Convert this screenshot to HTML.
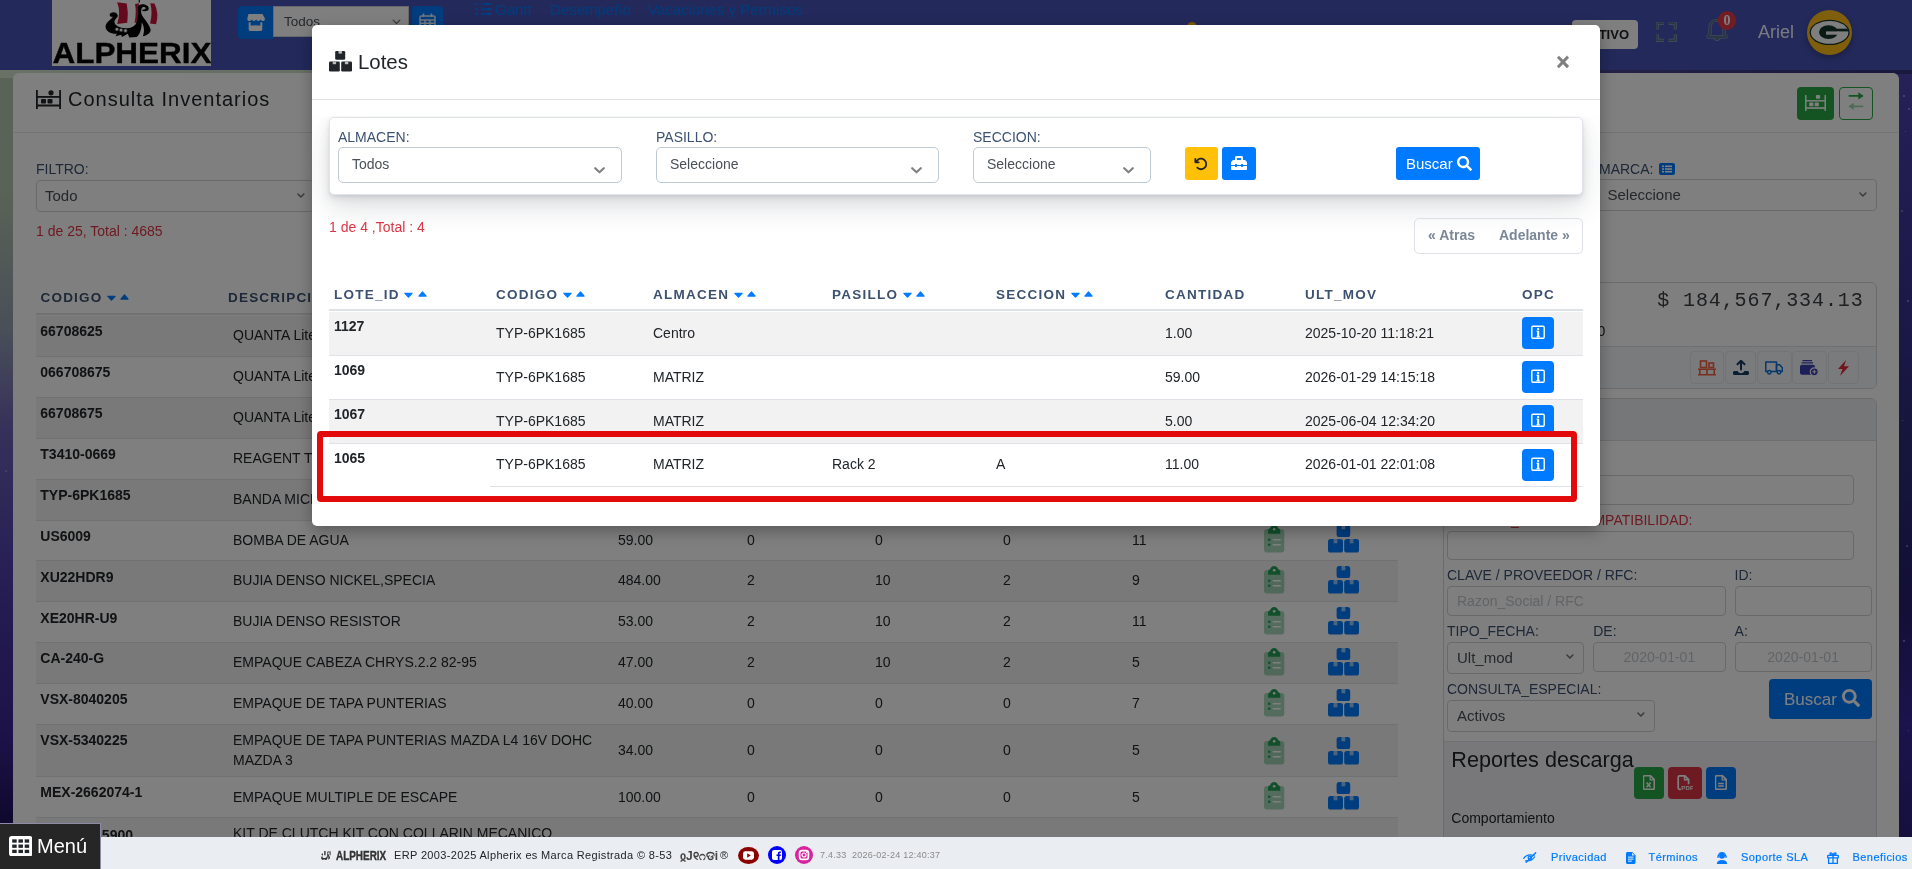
<!DOCTYPE html>
<html lang="es">
<head>
<meta charset="utf-8">
<title>Consulta Inventarios - Lotes</title>
<style>
*{box-sizing:border-box;margin:0;padding:0}
html,body{width:1912px;height:869px;overflow:hidden}
#modal,#card,#nav,#footer,#menu{will-change:transform}
body{font-family:"Liberation Sans",Arial,sans-serif;font-size:14px;color:#212529;background:#1a1850;position:relative}
.abs{position:absolute}
svg{display:block}
/* ---------- background page ---------- */
#bg{position:absolute;left:0;top:0;width:1912px;height:869px;overflow:hidden;
 background:linear-gradient(180deg,#b4c6ae 0,#b4c6ae 190px,#949eb0 330px,#6a62b4 430px,#4a38a8 600px,#3a2490 740px,#1c1054 830px,#140a40 869px)}
#bgT{position:absolute;left:0;top:66px;width:1912px;height:12px;background:linear-gradient(90deg,#d2e2cc 0,#ccdcc6 500px,#8a88b0 1300px,#4a4290 1600px,#34307c 1912px)}
#bgR{position:absolute;left:1897px;top:74px;width:15px;height:799px;background:linear-gradient(180deg,#4c42ae 0,#3c3498 180px,#2c2c78 380px,#261e6c 530px,#36289a 650px,#281e70 799px)}
#nav{position:absolute;left:0;top:0;width:1912px;height:70px;background:#4652b4}
#card{position:absolute;left:14px;top:73px;width:1884px;height:820px;background:#fff;border-radius:6px;box-shadow:-1px 0 0 #fff,1px 0 0 #fff}
#overlay{position:absolute;left:0;top:0;width:1912px;height:869px;background:rgba(0,0,0,.5)}

/* nav */
#logo{position:absolute;left:52px;top:0;width:159px;height:66px;background:#fff;overflow:hidden}
#logo .t{position:absolute;left:-20px;top:37.300px;width:200px;text-align:center;font-weight:700;font-size:29px;line-height:32px;color:#000;letter-spacing:0;white-space:nowrap;transform:scaleX(1.085);-webkit-text-stroke:.35px #000}
.nbtn{position:absolute;top:6px;height:33px;background:#007bff;border-radius:4px}
#nsel{position:absolute;left:273px;top:6px;width:136px;height:31px;background:#fff;border:1px solid #ced4da;font-size:13.500px;line-height:29px;color:#495057;padding-left:10px}
.nlink{position:absolute;top:0;font-size:15px;line-height:20px;color:#007bff;white-space:nowrap}
#activo{position:absolute;left:1572px;top:20px;width:66px;height:29px;background:#fff;border-radius:4px;font-size:13px;font-weight:700;line-height:29px;color:#212529;text-align:right;padding-right:9px}
#uname{position:absolute;left:1758px;top:21px;font-size:18px;line-height:22px;color:#f2f5ff}
#avatar{position:absolute;left:1807px;top:10px;width:45px;height:45px;border-radius:50%;background:#ffbc18;box-shadow:0 3px 6px rgba(0,0,0,.25)}
#badge{position:absolute;left:1718px;top:11px;width:18px;height:18.600px;border-radius:50%;background:#e63946;color:#fff;font-family:"Liberation Serif",serif;font-weight:700;font-size:14px;line-height:20.500px;text-align:center}
/* card */
#chead{position:absolute;left:0;top:0;width:1884px;height:60px;border-bottom:1px solid #e1e5eb}
#ctitle{position:absolute;left:54px;top:14px;font-size:20px;line-height:24px;letter-spacing:1px;color:#212529;white-space:nowrap}
.lab{position:absolute;font-size:14px;line-height:16px;color:#3d5170;white-space:nowrap}
.inp{position:absolute;background:#fff;border:1px solid #ced4da;border-radius:4px;font-size:14px;color:#495057;white-space:nowrap;overflow:hidden}
.sel{position:absolute;background:#fff;border:1px solid #ced4da;border-radius:4px;font-size:15px;color:#495057;padding-left:9px;white-space:nowrap}
.sel svg{position:absolute;right:9px}
#bt{position:absolute;left:22px;top:208px;width:1362px}
.bh{position:absolute;font-size:13.500px;font-weight:700;letter-spacing:1.200px;color:#3d5170;line-height:16px;white-space:nowrap}
.bh svg{display:inline-block;vertical-align:top;margin-left:4.450px}
.br{position:absolute;left:0;width:1362px;border-top:1px solid #dee2e6}
.br.s{background:#f2f2f2}
.br b{position:absolute;left:4.300px;top:7.200px;font-size:14px;line-height:16px;color:#212529;white-space:nowrap}
.br span{position:absolute;font-size:14px;line-height:20px;color:#212529;white-space:nowrap}
.br svg{position:absolute}
.pc{position:absolute;border:1px solid #d4d7db;border-radius:6px;background:#fff;overflow:hidden}

#footer .ft{position:absolute;top:0;font-size:11px;line-height:32px;color:#212529;white-space:nowrap;letter-spacing:.35px}
#footer .fl{position:absolute;top:3px;font-size:11px;line-height:34px;color:#007bff;white-space:nowrap;letter-spacing:.45px;-webkit-text-stroke:.2px #007bff}
#footer svg{position:absolute}
#menu{border-top:1.500px solid #8c8ca8;border-right:1.500px solid #8c8ca8}
#menu .t{position:absolute;left:37px;top:9px;font-size:20px;line-height:26px;color:#fff}
/* ---------- modal ---------- */
#modal{position:absolute;left:312px;top:25px;width:1288px;height:500.500px;background:#fff;border-radius:5px;box-shadow:0 5px 15px rgba(0,0,0,.3)}

/* modal inner */
#mhead{position:absolute;left:0;top:0;width:1288px;height:75px;border-bottom:1px solid #dee2e6}
#mtitle{position:absolute;left:46px;top:25px;font-size:20.4px;line-height:24px;color:#212529}
#mclose{-webkit-text-stroke:.4px #7f7f7f;position:absolute;left:1241px;top:22px;font-size:23px;font-weight:700;line-height:30px;color:#7f7f7f;width:20px;text-align:center}
#fcard{position:absolute;left:17px;top:92px;width:1254px;height:78px;background:#fff;border:1px solid #e1e5eb;border-radius:5px;
 box-shadow:0 7.5px 35px rgba(90,97,105,.1),0 15px 22.5px rgba(90,97,105,.1),0 4px 8.5px rgba(90,97,105,.12),0 2px 3px rgba(90,97,105,.1);clip-path:inset(-1px -80px -80px -80px)}
.flab{position:absolute;top:11px;font-size:14px;line-height:16px;color:#3d5170}
.fsel{position:absolute;top:29px;height:36px;border:1px solid #becad6;border-radius:5px;background:#fff;font-size:14px;line-height:32px;color:#495057;padding-left:13px}
.fsel svg{position:absolute;right:16px;top:19px}
.fbtn{position:absolute;top:29px;height:33px;border-radius:3px}
#pinfo{position:absolute;left:17px;top:194px;font-size:14px;line-height:16px;color:#dc3545}
#pager{position:absolute;left:1102px;top:193px;width:169px;height:36px;border:1px solid #dee2e6;border-radius:5px;font-size:14px;font-weight:700;color:#7b8796;line-height:33px}
#pager span{position:absolute;top:0}
/* modal table */
#mt{position:absolute;left:17px;top:257px;width:1254px}
.mh{position:absolute;top:0;height:29px;width:1254px;border-bottom:2px solid #dee2e6}
.mh span{position:absolute;top:4.500px;font-size:13.500px;font-weight:700;letter-spacing:1.250px;color:#3d5170;line-height:16px;white-space:nowrap}
.mh svg{display:inline-block;vertical-align:top;margin-left:4.450px}
.mr{position:absolute;left:0;width:1254px;height:44px;border-bottom:1px solid #dee2e6}
.mr.s{background:#f2f2f2}
.mr b{position:absolute;left:5px;top:6px;font-size:14px;line-height:16px;color:#212529}
.mr span{position:absolute;top:13px;font-size:14px;line-height:16px;color:#212529;white-space:nowrap}
.ib{position:absolute;left:1193px;top:5px;width:32px;height:32px;background:#007bff;border-radius:4px}
.ib svg{position:absolute;left:8px;top:8.300px}
#redbox{position:absolute;left:5px;top:406px;width:1260px;height:71px;border:6px solid #e20a0a;border-radius:4px}
/* ---------- footer ---------- */
#footer{position:absolute;left:0;top:837px;width:1912px;height:32px;background:#eaedf2}
#menu{position:absolute;left:0;top:823px;width:101px;height:46px;background:#262626;color:#fff}
</style>
</head>
<body>
<div id="bg"><div id="bgT"></div><div id="bgR"></div><i style="position:absolute;left:1903px;top:95px;width:2px;height:2px;background:#b8b8e0;border-radius:50%;opacity:0.8"></i><i style="position:absolute;left:1908px;top:108px;width:2px;height:2px;background:#b8b8e0;border-radius:50%;opacity:0.7"></i><i style="position:absolute;left:1905px;top:131px;width:1px;height:1px;background:#b8b8e0;border-radius:50%;opacity:0.7"></i><i style="position:absolute;left:1901px;top:210px;width:2px;height:2px;background:#b8b8e0;border-radius:50%;opacity:0.6"></i><i style="position:absolute;left:1907px;top:300px;width:2px;height:2px;background:#b8b8e0;border-radius:50%;opacity:0.7"></i><i style="position:absolute;left:1902px;top:420px;width:1px;height:1px;background:#b8b8e0;border-radius:50%;opacity:0.7"></i><i style="position:absolute;left:1906px;top:545px;width:2px;height:2px;background:#b8b8e0;border-radius:50%;opacity:0.6"></i><i style="position:absolute;left:1903px;top:640px;width:2px;height:2px;background:#b8b8e0;border-radius:50%;opacity:0.7"></i><i style="position:absolute;left:1908px;top:730px;width:1px;height:1px;background:#b8b8e0;border-radius:50%;opacity:0.7"></i><i style="position:absolute;left:3px;top:140px;width:2px;height:2px;background:#b8b8e0;border-radius:50%;opacity:0.5"></i><i style="position:absolute;left:8px;top:330px;width:1px;height:1px;background:#b8b8e0;border-radius:50%;opacity:0.5"></i><i style="position:absolute;left:5px;top:470px;width:2px;height:2px;background:#b8b8e0;border-radius:50%;opacity:0.5"></i></div>
<div id="nav"><div id="logo"><svg width="90" height="45" viewBox="0 0 1738 869" style="position:absolute;left:38px;top:0"><g fill="#c8143e"><path d="M525 45 L710 70 Q745 250 720 440 L525 465 Q600 250 525 45z"/><path d="M870 75 L945 65 Q915 250 935 430 L860 440 Q900 250 870 75z"/><path d="M1165 65 L1245 70 Q1340 260 1275 470 L1160 455 Q1215 250 1165 65z"/></g><path fill="#000" d="M380 290 C380 225 525 215 535 300 C540 345 480 355 472 420 C470 500 600 565 760 540 C900 515 945 400 925 130 C935 55 1145 65 1135 175 C1125 225 1020 235 1000 190 C1055 195 1095 170 1062 142 C1020 120 978 150 990 250 C1000 330 1150 450 1172 580 C1165 640 1100 690 1020 700 C1062 600 1040 500 1000 430 C1000 550 960 680 900 715 L760 722 L730 650 L620 715 L600 670 L490 700 L520 652 C400 660 300 600 300 510 C310 420 420 370 440 322 C420 332 385 322 380 290z"/><path fill="#000" d="M940 0h22v50h-22z"/><g fill="#fff" stroke="#222" stroke-width="14"><circle cx="520" cy="565" r="36"/><circle cx="600" cy="580" r="36"/><circle cx="685" cy="592" r="36"/></g></svg><div class="t">ALPHERIX</div></div>
<div class="nbtn" style="left:238px;width:35px;border-radius:4px 0 0 4px"><svg width="19" height="17" viewBox="0 0 19 17" style="position:absolute;left:8px;top:8px"><path fill="#fff" d="M2.500 0h14l2.300 4.200c.5 1.500-.6 2.800-2.100 2.800-1 0-1.800-.6-2.100-1.400-.4.800-1.200 1.400-2.200 1.400s-1.900-.6-2.300-1.400c-.4.800-1.200 1.400-2.200 1.400s-1.800-.6-2.200-1.400C5.300 6.400 4.500 7 3.500 7 2 7 .9 5.700 1.400 4.200zM2.700 8.300c.6.200 1.300.2 1.900 0v3.200h9.800V8.300c.6.200 1.300.2 1.900 0v7c0 .9-.7 1.600-1.600 1.600H4.300c-.9 0-1.600-.7-1.600-1.600z"/></svg></div>
<div id="nsel">Todos<svg width="9" height="6" viewBox="0 0 12 8" style="position:absolute;left:118px;top:12px"><path d="M1.500 1.500L6 6l4.500-4.500" fill="none" stroke="#777" stroke-width="1.600" stroke-linecap="round" stroke-linejoin="round"/></svg></div>
<div class="nbtn" style="left:412px;width:31px"><svg width="17" height="18" viewBox="0 0 17 18" style="position:absolute;left:7px;top:7px"><g fill="none" stroke="#e8eef8" stroke-width="1.500"><rect x="1" y="3" width="15" height="14" rx="1.500"/><path d="M1 7h15M1 10.300h15M1 13.600h15M6 7v10M11 7v10M4.500 .5v3.500M12.500 .5v3.500"/></g></svg></div>
<div class="nlink" style="left:475px"><svg width="17" height="14" viewBox="0 0 17 14" style="display:inline-block;vertical-align:-1px;margin-right:3px"><g fill="none" stroke="#007bff" stroke-width="2"><path d="M6 2h11M6 7h11M6 12h11"/><path d="M0 2h3M0 7h3M0 12h3" stroke-dasharray="3 1"/></g></svg>Gantt</div><div class="nlink" style="left:550px">Desempeño</div><div class="nlink" style="left:648px">Vacaciones y Permisos</div>
<div style="position:absolute;left:1187px;top:22px;width:10px;height:10px;border-radius:50%;background:#ffb000"></div><div id="activo">ACTIVO</div><svg width="20.600" height="19.700" viewBox="0 0 22 21" style="position:absolute;left:1656px;top:22px"><path d="M1.300 8V1.300h7.200M13.500 1.300h7.200V8M20.700 13v6.700h-7.200M8.500 19.700H1.300V13" fill="none" stroke="#93a1b8" stroke-width="3.400"/><path d="M1.300 8V1.300h7.200M13.500 1.300h7.200V8M20.700 13v6.700h-7.200M8.500 19.700H1.300V13" fill="none" stroke="#506c8c" stroke-width="1.900"/></svg><svg width="22" height="25" viewBox="0 0 22 25" style="position:absolute;left:1706px;top:18px"><path d="M11 2.200c-4.200 0-7 3-7 7.200v6.600l-2 2v.9h18v-.9l-2-2V9.400c0-4.200-2.800-7.200-7-7.200z" fill="none" stroke="#93a1b8" stroke-width="3.100" stroke-linejoin="round"/><path d="M7.300 19.500c.4 2.200 1.800 3.600 3.700 3.600s3.300-1.400 3.700-3.600z" fill="#93a1b8"/><path d="M11 2.200c-4.200 0-7 3-7 7.200v6.600l-2 2v.9h18v-.9l-2-2V9.400c0-4.200-2.800-7.200-7-7.200z" fill="none" stroke="#506c8c" stroke-width="2.100" stroke-linejoin="round"/><path d="M8.300 19.700c.4 1.600 1.400 2.600 2.700 2.600s2.300-1 2.700-2.600z" fill="#506c8c"/></svg><div id="badge">0</div>
<div id="uname">Ariel</div><div id="avatar"><svg width="45" height="45" viewBox="0 0 45 45"><defs><clipPath id="gclip"><ellipse cx="22.600" cy="22.400" rx="18.700" ry="11.400"/></clipPath></defs><ellipse cx="22.600" cy="22.400" rx="20" ry="12.700" fill="#14352b"/><ellipse cx="22.600" cy="22.400" rx="18.700" ry="11.400" fill="#fff"/><g clip-path="url(#gclip)"><ellipse cx="21.500" cy="22.100" rx="9.500" ry="6.900" fill="#14352b"/><rect x="29" y="18.700" width="14" height="2.700" fill="#14352b"/><rect x="19" y="21.400" width="13" height="3.300" fill="#fff"/></g></svg></div></div>
<div id="card"><svg width="25" height="19" viewBox="0 0 25 19" style="position:absolute;left:22px;top:17px"><g fill="#212529"><rect x="0" y="0" width="1.800" height="19"/><rect x="23.200" y="0" width="1.800" height="19"/><rect x="0" y="6" width="25" height="1.800"/><rect x="0" y="14.500" width="25" height="2"/><rect x="5" y="9" width="5" height="4.500" rx="1"/><rect x="11.500" y="9" width="5" height="4.500" rx="1"/><circle cx="15" cy="2.800" r="2.600"/></g></svg><div id="chead"><div id="ctitle">Consulta Inventarios</div><div style="position:absolute;left:1783px;top:14px;width:37px;height:33px;background:#28a745;border-radius:4px"><svg width="21" height="16" viewBox="0 0 25 19" style="position:absolute;left:8px;top:8px"><g fill="#fff"><rect x="0" y="0" width="1.800" height="19"/><rect x="23.200" y="0" width="1.800" height="19"/><rect x="0" y="6" width="25" height="1.800"/><rect x="0" y="14.500" width="25" height="2"/><rect x="5" y="9" width="5" height="4.500" rx="1"/><rect x="11.500" y="9" width="5" height="4.500" rx="1"/><rect x="13" y="0" width="5" height="4.500" rx="1"/></g></svg></div><div style="position:absolute;left:1825px;top:14px;width:34px;height:33px;border:1px solid #28a745;border-radius:4px"><svg width="16" height="18" viewBox="0 0 16 18" style="position:absolute;left:8px;top:4px"><g fill="#28a745"><rect x=".5" y="3" width="10.500" height="1.700" rx=".8"/><path d="M10.300 .3l5.400 3.600-5.400 3.600z"/><g opacity=".45"><rect x="5" y="13.500" width="10.500" height="1.700" rx=".8"/><path d="M5.700 10.700L.3 14.300l5.400 3.600z"/></g></g></svg></div></div><div class="lab" style="left:22px;top:88px">FILTRO:</div><div class="sel" style="left:22px;top:107px;width:278px;height:31.500px;line-height:30px;padding-left:8px">Todo<svg width="7.800" height="5.500" viewBox="0 0 10 7" style="right:8px;top:12px"><path d="M1.200 1.300L5 5.200l3.800-3.900" fill="none" stroke="#747474" stroke-width="1.900" stroke-linecap="round" stroke-linejoin="round"/></svg></div><div class="lab" style="left:22px;top:150px;color:#dc3545">1 de 25, Total : 4685</div><div class="lab" style="left:1585px;top:88px">MARCA:</div><div style="position:absolute;left:1645px;top:90px;width:16px;height:12px;background:#007bff;border-radius:2px"><svg width="16" height="12" viewBox="0 0 16 12"><g fill="#fff"><rect x="3" y="2.500" width="2" height="1.600"/><rect x="6" y="2.500" width="7" height="1.600"/><rect x="3" y="5.200" width="2" height="1.600"/><rect x="6" y="5.200" width="7" height="1.600"/><rect x="3" y="7.900" width="2" height="1.600"/><rect x="6" y="7.900" width="7" height="1.600"/></g></svg></div><div class="sel" style="left:1560px;top:106.300px;width:303px;height:32.200px;line-height:30px;padding-left:32.500px">Seleccione<svg width="7.800" height="5.500" viewBox="0 0 10 7" style="top:12px"><path d="M1.200 1.300L5 5.200l3.800-3.900" fill="none" stroke="#747474" stroke-width="1.900" stroke-linecap="round" stroke-linejoin="round"/></svg></div><div id="bt"><div class="bh" style="left:4.500px;top:9px">CODIGO<svg width="9" height="16" viewBox="0 0 9 16"><path fill="#007bff" stroke="#007bff" stroke-width="1.200" stroke-linejoin="round" d="M0.900 6.300h7.200L4.500 10.200z"/></svg><svg width="9" height="16" viewBox="0 0 9 16"><path fill="#007bff" stroke="#007bff" stroke-width="1.200" stroke-linejoin="round" d="M0.900 9.100h7.200L4.500 4.900z"/></svg></div><div class="bh" style="left:192px;top:9px">DESCRIPCION<svg width="9" height="16" viewBox="0 0 9 16"><path fill="#007bff" stroke="#007bff" stroke-width="1.200" stroke-linejoin="round" d="M0.900 6.300h7.200L4.500 10.200z"/></svg><svg width="9" height="16" viewBox="0 0 9 16"><path fill="#007bff" stroke="#007bff" stroke-width="1.200" stroke-linejoin="round" d="M0.900 9.100h7.200L4.500 4.900z"/></svg></div><div style="position:absolute;left:0;top:32px;width:1362px;height:2px;background:#dee2e6"></div><div class="br s" style="top:34.50px;height:40.90px;border-top:none"><b style="top:7.200px">66708625</b><span style="left:197px;top:9px">QUANTA Lite</span></div><div class="br" style="top:75.40px;height:40.80px"><b style="top:6.200px">066708675</b><span style="left:197px;top:8.500px">QUANTA Lite</span></div><div class="br s" style="top:116.20px;height:40.80px"><b>66708675</b><span style="left:197px;top:8.500px">QUANTA Lite</span></div><div class="br" style="top:157.00px;height:41.00px"><b>T3410-0669</b><span style="left:197px;top:8.500px">REAGENT T</span></div><div class="br s" style="top:198.00px;height:41.00px"><b>TYP-6PK1685</b><span style="left:197px;top:8.500px">BANDA MICRO V</span></div><div class="br" style="top:239.00px;height:40.00px"><b>US6009</b><span style="left:197px;top:8.500px">BOMBA DE AGUA</span><span style="left:582px;top:8.500px">59.00</span><span style="left:711px;top:8.500px">0</span><span style="left:839px;top:8.500px">0</span><span style="left:967px;top:8.500px">0</span><span style="left:1096px;top:8.500px">11</span><svg width="21" height="28" viewBox="0 0 21 28" style="left:1228px;top:4.200px"><rect x="0" y="4" width="20.300" height="23.500" rx="3" fill="#23a055" opacity=".4"/><path fill="#23a055" d="M10.150 0c2 0 3.600 1.400 4 3.200 1.300.3 2.100 1.300 2.100 2.600v3H4.050v-3c0-1.300.8-2.300 2.100-2.600.4-1.800 2-3.200 4-3.200z"/><circle cx="10.150" cy="4.300" r="1.300" fill="#fff"/><g fill="#23a055"><circle cx="5.200" cy="14.800" r="1.300"/><circle cx="5.200" cy="19.800" r="1.300"/></g><g fill="#fff"><rect x="8.500" y="14" width="8.500" height="1.600" rx=".8"/><rect x="8.500" y="19" width="8.500" height="1.600" rx=".8"/></g></svg><svg width="31" height="28" viewBox="0 0 31 28" style="left:1292px;top:4.200px"><g fill="#007bff"><rect x="8.600" y="0" width="13.600" height="12" rx="2.600"/><rect x="0" y="14" width="15" height="13.500" rx="2.600"/><rect x="16.200" y="14" width="14.800" height="13.500" rx="2.600"/></g><g fill="#99caff"><rect x="13.500" y="0" width="3.800" height="4.300"/><rect x="5.600" y="14" width="3.800" height="4.300"/><rect x="21.700" y="14" width="3.800" height="4.300"/></g></svg></div><div class="br s" style="top:279.00px;height:41.00px"><b style="top:8.200px">XU22HDR9</b><span style="left:197px;top:8.500px">BUJIA DENSO NICKEL,SPECIA</span><span style="left:582px;top:8.500px">484.00</span><span style="left:711px;top:8.500px">2</span><span style="left:839px;top:8.500px">10</span><span style="left:967px;top:8.500px">2</span><span style="left:1096px;top:8.500px">9</span><svg width="21" height="28" viewBox="0 0 21 28" style="left:1228px;top:5.200px"><rect x="0" y="4" width="20.300" height="23.500" rx="3" fill="#23a055" opacity=".4"/><path fill="#23a055" d="M10.150 0c2 0 3.600 1.400 4 3.200 1.300.3 2.100 1.300 2.100 2.600v3H4.050v-3c0-1.300.8-2.300 2.100-2.600.4-1.800 2-3.200 4-3.200z"/><circle cx="10.150" cy="4.300" r="1.300" fill="#fff"/><g fill="#23a055"><circle cx="5.200" cy="14.800" r="1.300"/><circle cx="5.200" cy="19.800" r="1.300"/></g><g fill="#fff"><rect x="8.500" y="14" width="8.500" height="1.600" rx=".8"/><rect x="8.500" y="19" width="8.500" height="1.600" rx=".8"/></g></svg><svg width="31" height="28" viewBox="0 0 31 28" style="left:1292px;top:5.200px"><g fill="#007bff"><rect x="8.600" y="0" width="13.600" height="12" rx="2.600"/><rect x="0" y="14" width="15" height="13.500" rx="2.600"/><rect x="16.200" y="14" width="14.800" height="13.500" rx="2.600"/></g><g fill="#99caff"><rect x="13.500" y="0" width="3.800" height="4.300"/><rect x="5.600" y="14" width="3.800" height="4.300"/><rect x="21.700" y="14" width="3.800" height="4.300"/></g></svg></div><div class="br" style="top:320.00px;height:41.00px"><b style="top:8.200px">XE20HR-U9</b><span style="left:197px;top:8.500px">BUJIA DENSO RESISTOR</span><span style="left:582px;top:8.500px">53.00</span><span style="left:711px;top:8.500px">2</span><span style="left:839px;top:8.500px">10</span><span style="left:967px;top:8.500px">2</span><span style="left:1096px;top:8.500px">11</span><svg width="21" height="28" viewBox="0 0 21 28" style="left:1228px;top:5.200px"><rect x="0" y="4" width="20.300" height="23.500" rx="3" fill="#23a055" opacity=".4"/><path fill="#23a055" d="M10.150 0c2 0 3.600 1.400 4 3.200 1.300.3 2.100 1.300 2.100 2.600v3H4.050v-3c0-1.300.8-2.300 2.100-2.600.4-1.800 2-3.200 4-3.200z"/><circle cx="10.150" cy="4.300" r="1.300" fill="#fff"/><g fill="#23a055"><circle cx="5.200" cy="14.800" r="1.300"/><circle cx="5.200" cy="19.800" r="1.300"/></g><g fill="#fff"><rect x="8.500" y="14" width="8.500" height="1.600" rx=".8"/><rect x="8.500" y="19" width="8.500" height="1.600" rx=".8"/></g></svg><svg width="31" height="28" viewBox="0 0 31 28" style="left:1292px;top:5.200px"><g fill="#007bff"><rect x="8.600" y="0" width="13.600" height="12" rx="2.600"/><rect x="0" y="14" width="15" height="13.500" rx="2.600"/><rect x="16.200" y="14" width="14.800" height="13.500" rx="2.600"/></g><g fill="#99caff"><rect x="13.500" y="0" width="3.800" height="4.300"/><rect x="5.600" y="14" width="3.800" height="4.300"/><rect x="21.700" y="14" width="3.800" height="4.300"/></g></svg></div><div class="br s" style="top:361.00px;height:41.00px"><b style="top:7.200px">CA-240-G</b><span style="left:197px;top:8.500px">EMPAQUE CABEZA CHRYS.2.2 82-95</span><span style="left:582px;top:8.500px">47.00</span><span style="left:711px;top:8.500px">2</span><span style="left:839px;top:8.500px">10</span><span style="left:967px;top:8.500px">2</span><span style="left:1096px;top:8.500px">5</span><svg width="21" height="28" viewBox="0 0 21 28" style="left:1228px;top:5.200px"><rect x="0" y="4" width="20.300" height="23.500" rx="3" fill="#23a055" opacity=".4"/><path fill="#23a055" d="M10.150 0c2 0 3.600 1.400 4 3.200 1.300.3 2.100 1.300 2.100 2.600v3H4.050v-3c0-1.300.8-2.300 2.100-2.600.4-1.800 2-3.200 4-3.200z"/><circle cx="10.150" cy="4.300" r="1.300" fill="#fff"/><g fill="#23a055"><circle cx="5.200" cy="14.800" r="1.300"/><circle cx="5.200" cy="19.800" r="1.300"/></g><g fill="#fff"><rect x="8.500" y="14" width="8.500" height="1.600" rx=".8"/><rect x="8.500" y="19" width="8.500" height="1.600" rx=".8"/></g></svg><svg width="31" height="28" viewBox="0 0 31 28" style="left:1292px;top:5.200px"><g fill="#007bff"><rect x="8.600" y="0" width="13.600" height="12" rx="2.600"/><rect x="0" y="14" width="15" height="13.500" rx="2.600"/><rect x="16.200" y="14" width="14.800" height="13.500" rx="2.600"/></g><g fill="#99caff"><rect x="13.500" y="0" width="3.800" height="4.300"/><rect x="5.600" y="14" width="3.800" height="4.300"/><rect x="21.700" y="14" width="3.800" height="4.300"/></g></svg></div><div class="br" style="top:402.00px;height:41.00px"><b style="top:7.200px">VSX-8040205</b><span style="left:197px;top:8.500px">EMPAQUE DE TAPA PUNTERIAS</span><span style="left:582px;top:8.500px">40.00</span><span style="left:711px;top:8.500px">0</span><span style="left:839px;top:8.500px">0</span><span style="left:967px;top:8.500px">0</span><span style="left:1096px;top:8.500px">7</span><svg width="21" height="28" viewBox="0 0 21 28" style="left:1228px;top:5.200px"><rect x="0" y="4" width="20.300" height="23.500" rx="3" fill="#23a055" opacity=".4"/><path fill="#23a055" d="M10.150 0c2 0 3.600 1.400 4 3.200 1.300.3 2.100 1.300 2.100 2.600v3H4.050v-3c0-1.300.8-2.300 2.100-2.600.4-1.800 2-3.200 4-3.200z"/><circle cx="10.150" cy="4.300" r="1.300" fill="#fff"/><g fill="#23a055"><circle cx="5.200" cy="14.800" r="1.300"/><circle cx="5.200" cy="19.800" r="1.300"/></g><g fill="#fff"><rect x="8.500" y="14" width="8.500" height="1.600" rx=".8"/><rect x="8.500" y="19" width="8.500" height="1.600" rx=".8"/></g></svg><svg width="31" height="28" viewBox="0 0 31 28" style="left:1292px;top:5.200px"><g fill="#007bff"><rect x="8.600" y="0" width="13.600" height="12" rx="2.600"/><rect x="0" y="14" width="15" height="13.500" rx="2.600"/><rect x="16.200" y="14" width="14.800" height="13.500" rx="2.600"/></g><g fill="#99caff"><rect x="13.500" y="0" width="3.800" height="4.300"/><rect x="5.600" y="14" width="3.800" height="4.300"/><rect x="21.700" y="14" width="3.800" height="4.300"/></g></svg></div><div class="br s" style="top:443.00px;height:52.00px"><b style="top:7.200px">VSX-5340225</b><span style="left:197px;top:4.700px">EMPAQUE DE TAPA PUNTERIAS MAZDA L4 16V DOHC<br>MAZDA 3</span><span style="left:582px;top:15.000px">34.00</span><span style="left:711px;top:15.000px">0</span><span style="left:839px;top:15.000px">0</span><span style="left:967px;top:15.000px">0</span><span style="left:1096px;top:15.000px">5</span><svg width="21" height="28" viewBox="0 0 21 28" style="left:1228px;top:11.500px"><rect x="0" y="4" width="20.300" height="23.500" rx="3" fill="#23a055" opacity=".4"/><path fill="#23a055" d="M10.150 0c2 0 3.600 1.400 4 3.200 1.300.3 2.100 1.300 2.100 2.600v3H4.050v-3c0-1.300.8-2.300 2.100-2.600.4-1.800 2-3.200 4-3.200z"/><circle cx="10.150" cy="4.300" r="1.300" fill="#fff"/><g fill="#23a055"><circle cx="5.200" cy="14.800" r="1.300"/><circle cx="5.200" cy="19.800" r="1.300"/></g><g fill="#fff"><rect x="8.500" y="14" width="8.500" height="1.600" rx=".8"/><rect x="8.500" y="19" width="8.500" height="1.600" rx=".8"/></g></svg><svg width="31" height="28" viewBox="0 0 31 28" style="left:1292px;top:11.500px"><g fill="#007bff"><rect x="8.600" y="0" width="13.600" height="12" rx="2.600"/><rect x="0" y="14" width="15" height="13.500" rx="2.600"/><rect x="16.200" y="14" width="14.800" height="13.500" rx="2.600"/></g><g fill="#99caff"><rect x="13.500" y="0" width="3.800" height="4.300"/><rect x="5.600" y="14" width="3.800" height="4.300"/><rect x="21.700" y="14" width="3.800" height="4.300"/></g></svg></div><div class="br" style="top:495.00px;height:41.00px"><b style="top:7.200px">MEX-2662074-1</b><span style="left:197px;top:9.500px">EMPAQUE MULTIPLE DE ESCAPE</span><span style="left:582px;top:9.500px">100.00</span><span style="left:711px;top:9.500px">0</span><span style="left:839px;top:9.500px">0</span><span style="left:967px;top:9.500px">0</span><span style="left:1096px;top:9.500px">5</span><svg width="21" height="28" viewBox="0 0 21 28" style="left:1228px;top:5.200px"><rect x="0" y="4" width="20.300" height="23.500" rx="3" fill="#23a055" opacity=".4"/><path fill="#23a055" d="M10.150 0c2 0 3.600 1.400 4 3.200 1.300.3 2.100 1.300 2.100 2.600v3H4.050v-3c0-1.300.8-2.300 2.100-2.600.4-1.800 2-3.200 4-3.200z"/><circle cx="10.150" cy="4.300" r="1.300" fill="#fff"/><g fill="#23a055"><circle cx="5.200" cy="14.800" r="1.300"/><circle cx="5.200" cy="19.800" r="1.300"/></g><g fill="#fff"><rect x="8.500" y="14" width="8.500" height="1.600" rx=".8"/><rect x="8.500" y="19" width="8.500" height="1.600" rx=".8"/></g></svg><svg width="31" height="28" viewBox="0 0 31 28" style="left:1292px;top:5.200px"><g fill="#007bff"><rect x="8.600" y="0" width="13.600" height="12" rx="2.600"/><rect x="0" y="14" width="15" height="13.500" rx="2.600"/><rect x="16.200" y="14" width="14.800" height="13.500" rx="2.600"/></g><g fill="#99caff"><rect x="13.500" y="0" width="3.800" height="4.300"/><rect x="5.600" y="14" width="3.800" height="4.300"/><rect x="21.700" y="14" width="3.800" height="4.300"/></g></svg></div><div class="br s" style="top:536.00px;height:54.00px"><b style="top:8.700px;left:auto;right:1265px">LUK-62035900</b><span style="left:197px;top:4.700px">KIT DE CLUTCH KIT CON COLLARIN MECANICO<br>NISSAN</span></div></div><div class="pc" style="left:1429px;top:209.2px;width:434px;height:106.500px"><div style="position:absolute;right:12.400px;top:6px;font-family:'Liberation Mono',monospace;font-size:20px;letter-spacing:.9px;line-height:24px;color:#3a3f44;white-space:nowrap">$ 184,567,334.13</div><div style="position:absolute;left:134px;top:40px;font-size:14px;line-height:16px;color:#212529">0.00</div><div style="position:absolute;left:0;top:63px;width:434px;height:44px;background:#f5f6f8;border-top:1px solid #dfe1e5"></div><div style="position:absolute;left:245.8px;top:68.0px;width:34.6px;height:32.500px;border:1px solid #e4e6ea;border-radius:4px;background:#f5f6f8"><svg width="18" height="16" viewBox="0 0 18 16" style="position:absolute;left:7.3px;top:7.500px"><g fill="none" stroke="#f0623c" stroke-width="1.600"><rect x="2.500" y="1" width="6" height="6.500"/><rect x="11" y="3" width="4.500" height="4.500"/><path d="M0 9.300h18M0 14.800h18M1.800 9.300v5.500M9 9.300v5.500M16.200 9.300v5.500"/></g></svg></div><div style="position:absolute;left:281.0px;top:68.0px;width:31.2px;height:32.500px;border:1px solid #e4e6ea;border-radius:4px;background:#f5f6f8"><svg width="18" height="16" viewBox="0 0 18 16" style="position:absolute;left:5.6px;top:7.500px"><g><path d="M9 1v8.500M5.500 4.200L9 .8l3.500 3.400" fill="none" stroke="#173b63" stroke-width="2" stroke-linecap="round" stroke-linejoin="round"/><path fill="#173b63" d="M2.500 11h3.200c.4 1.300 1.700 2.200 3.300 2.200s2.900-.9 3.300-2.200h3.200c.9 0 1.500.700 1.500 1.500v1c0 .9-.7 1.500-1.500 1.500h-13c-.9 0-1.500-.700-1.500-1.500v-1c0-.900.700-1.500 1.500-1.500z"/></g></svg></div><div style="position:absolute;left:313.0px;top:68.0px;width:34.6px;height:32.500px;border:1px solid #e4e6ea;border-radius:4px;background:#f5f6f8"><svg width="18" height="16" viewBox="0 0 18 16" style="position:absolute;left:7.3px;top:7.500px"><g fill="none" stroke="#0a6fd8" stroke-width="1.500" stroke-linejoin="round"><path d="M.8 2h10.700v9.500H.8z"/><path d="M11.500 4.800h3.200l2.600 3v3.700h-5.800z"/><circle cx="4.300" cy="12.300" r="1.700" fill="#f5f6f8"/><circle cx="14" cy="12.300" r="1.700" fill="#f5f6f8"/></g></svg></div><div style="position:absolute;left:348.0px;top:68.0px;width:35.2px;height:32.500px;border:1px solid #e4e6ea;border-radius:4px;background:#f5f6f8"><svg width="19" height="16" viewBox="0 0 19 16" style="position:absolute;left:7.1px;top:7.500px"><g><path fill="#3a3fb0" d="M2.500 0h9.500v1.300H2.500zM1.500 2.300h11.500v1.300H1.500zM2 4.800h11c1.100 0 2 .9 2 2v6c0 1.100-.9 2-2 2H2c-1.100 0-2-.9-2-2v-6c0-1.100.9-2 2-2z"/><circle cx="14.300" cy="11.800" r="4" fill="#3a3fb0" stroke="#f5f6f8" stroke-width="1.200"/><path d="M14.300 9.800v4M12.300 11.800h4" stroke="#f5f6f8" stroke-width="1.100"/></g></svg></div><div style="position:absolute;left:383.7px;top:68.0px;width:31.2px;height:32.500px;border:1px solid #e4e6ea;border-radius:4px;background:#f5f6f8"><svg width="16" height="16" viewBox="0 0 16 16" style="position:absolute;left:6.6px;top:7.500px"><path fill="#e8293b" d="M11 0L3 9h4.500L5 16l9-9.800H9z"/></svg></div></div><div class="pc" style="left:1429px;top:325.2px;width:434px;height:520px"><div style="position:absolute;left:0;top:0;width:434px;height:41.500px;background:#edeef2;border-bottom:1px solid #d9dce0"></div><div style="position:absolute;left:0;top:342px;width:434px;height:200px;background:#f0f1f5;border-top:1px solid #dfe1e5"></div></div><div class="inp" style="left:1433.0px;top:402.0px;width:407.3px;height:30.0px;line-height:28.0px;text-align:left;padding:0 9px;color:#c3c8cf"></div><div class="lab" style="left:auto;right:205.5px;top:439.0px;color:#dc3545">CLAVE_MARCA COMPATIBILIDAD:</div><div class="inp" style="left:1433.0px;top:457.6px;width:407.3px;height:29.7px;line-height:27.7px;text-align:left;padding:0 9px;color:#c3c8cf"></div><div class="lab" style="left:1433.0px;top:494.2px;color:#3d5170">CLAVE / PROVEEDOR / RFC:</div><div class="lab" style="left:1720.6px;top:494.2px;color:#3d5170">ID:</div><div class="inp" style="left:1433.0px;top:513.2px;width:278.6px;height:30.1px;line-height:28.1px;text-align:left;padding:0 9px;color:#c3c8cf">Razon_Social / RFC</div><div class="inp" style="left:1720.6px;top:513.2px;width:137.1px;height:30.1px;line-height:28.1px;text-align:left;padding:0 9px;color:#c3c8cf"></div><div class="lab" style="left:1433.0px;top:549.800px;color:#3d5170">TIPO_FECHA:</div><div class="lab" style="left:1579.2px;top:549.800px;color:#3d5170">DE:</div><div class="lab" style="left:1720.6px;top:549.800px;color:#3d5170">A:</div><div class="sel" style="left:1433.0px;top:569.3px;width:136.800px;height:31.700px;line-height:30px">Ult_mod<svg width="7.800" height="5.500" viewBox="0 0 10 7" style="top:11px"><path d="M1.200 1.300L5 5.200l3.800-3.900" fill="none" stroke="#747474" stroke-width="1.900" stroke-linecap="round" stroke-linejoin="round"/></svg></div><div class="inp" style="left:1579.2px;top:569.3px;width:132.4px;height:30.2px;line-height:28.2px;text-align:center;padding:0 9px;color:#c3c8cf">2020-01-01</div><div class="inp" style="left:1720.6px;top:569.3px;width:137.1px;height:30.2px;line-height:28.2px;text-align:center;padding:0 9px;color:#c3c8cf">2020-01-01</div><div class="lab" style="left:1433.0px;top:608.0px;color:#3d5170">CONSULTA_ESPECIAL:</div><div class="sel" style="left:1433.0px;top:627.4px;width:207.700px;height:31.900px;line-height:30px">Activos<svg width="7.800" height="5.500" viewBox="0 0 10 7" style="top:11px"><path d="M1.200 1.300L5 5.200l3.800-3.900" fill="none" stroke="#747474" stroke-width="1.900" stroke-linecap="round" stroke-linejoin="round"/></svg></div><div style="position:absolute;left:1755.0px;top:606.2px;width:102.700px;height:39.500px;background:#007bff;border-radius:4px;color:#fff;font-size:17px;line-height:41px;padding-left:15px;white-space:nowrap">Buscar <svg width="18" height="18" viewBox="0 0 512 512" style="display:inline-block;vertical-align:-2px"><path fill="#fff" d="M505 442.700L405.300 343c-4.500-4.500-10.600-7-17-7H372c27.600-35.300 44-79.700 44-128C416 93.100 322.900 0 208 0S0 93.100 0 208s93.100 208 208 208c48.300 0 92.700-16.400 128-44v16.300c0 6.400 2.500 12.500 7 17l99.700 99.700c9.400 9.400 24.600 9.400 33.900 0l28.300-28.300c9.400-9.400 9.400-24.600.1-34zM208 336c-70.700 0-128-57.200-128-128 0-70.700 57.200-128 128-128 70.700 0 128 57.200 128 128 0 70.700-57.200 128-128 128z"/></svg></div><div style="position:absolute;left:1437.3px;top:674.0px;font-size:21.600px;line-height:26px;color:#212529;white-space:nowrap">Reportes descarga</div><div style="position:absolute;left:1620.0px;top:693.7px;width:29.7px;height:32.200px;background:#28a745;border-radius:4px"><svg width="12" height="15" viewBox="0 0 12 15" style="position:absolute;left:8.9px;top:8.500px"><path d="M1.800.7h5.600l3.900 3.900v8.200c0 .8-.6 1.500-1.400 1.500H1.800C1 14.300.4 13.600.4 12.800V2.200C.4 1.400 1 .7 1.800.7z" fill="none" stroke="#fff" stroke-width="1.700"/><path d="M7.200 1v3.800H11" fill="none" stroke="#fff" stroke-width="1.300"/><path d="M3.600 7.500l4 4.800M7.600 7.500l-4 4.800" stroke="#fff" stroke-width="1.600"/></svg></div><div style="position:absolute;left:1654.0px;top:693.7px;width:33.9px;height:32.200px;background:#dc3545;border-radius:4px"><svg width="16" height="16" viewBox="0 0 16 16" style="position:absolute;left:9px;top:8px"><path d="M3.800 14.300H2.600c-.8 0-1.400-.7-1.400-1.500V2.300C1.200 1.500 1.800.8 2.600.8h5.200l3.800 3.800v4.600" fill="none" stroke="#fff" stroke-width="1.700"/><path d="M7.500 1v3.800h3.800" fill="none" stroke="#fff" stroke-width="1.400"/><text x="10.600" y="15" font-size="6" font-weight="700" fill="#fff" text-anchor="middle" font-family="Liberation Sans,sans-serif" letter-spacing=".2">PDF</text></svg></div><div style="position:absolute;left:1692.0px;top:693.7px;width:29.8px;height:32.200px;background:#007bff;border-radius:4px"><svg width="12" height="15" viewBox="0 0 12 15" style="position:absolute;left:8.9px;top:8.500px"><path d="M1.800.7h5.600l3.900 3.900v8.200c0 .8-.6 1.500-1.400 1.500H1.800C1 14.300.4 13.600.4 12.800V2.200C.4 1.400 1 .7 1.800.7z" fill="none" stroke="#fff" stroke-width="1.700"/><path d="M7.200 1v3.800H11" fill="none" stroke="#fff" stroke-width="1.300"/><path d="M3.200 8.500h5.600M3.200 11h5.600" stroke="#fff" stroke-width="1.500"/></svg></div><div style="position:absolute;left:1437.3px;top:737.0px;font-size:14px;line-height:16px;color:#212529;white-space:nowrap">Comportamiento</div></div>
<div id="overlay"></div>
<div id="modal">
<div id="mhead"><div style="position:absolute;left:17px;top:26px"><svg width="23" height="21" viewBox="0 0 23 21"><g fill="#212529"><rect x="6.200" y="0" width="10" height="8.800" rx="1.300"/><rect x="0" y="10.600" width="10.800" height="9.900" rx="1.300"/><rect x="12.200" y="10.600" width="10.800" height="9.900" rx="1.300"/></g><g fill="#b9bbbd"><rect x="9.500" y="0" width="3.400" height="2.600"/><rect x="3.700" y="10.600" width="3.400" height="2.600"/><rect x="15.900" y="10.600" width="3.400" height="2.600"/></g></svg></div><div id="mtitle">Lotes</div><div id="mclose">×</div></div>
<div id="fcard">
 <div class="flab" style="left:8px">ALMACEN:</div>
 <div class="fsel" style="left:8px;width:283.500px">Todos<svg width="11" height="7" viewBox="0 0 11 7"><path d="M1.2 1.2 L5.5 5.3 L9.8 1.2" fill="none" stroke="#808080" stroke-width="2.1" stroke-linecap="round" stroke-linejoin="round"/></svg></div>
 <div class="flab" style="left:326px">PASILLO:</div>
 <div class="fsel" style="left:326px;width:283px">Seleccione<svg width="11" height="7" viewBox="0 0 11 7"><path d="M1.2 1.2 L5.5 5.3 L9.8 1.2" fill="none" stroke="#808080" stroke-width="2.1" stroke-linecap="round" stroke-linejoin="round"/></svg></div>
 <div class="flab" style="left:643px">SECCION:</div>
 <div class="fsel" style="left:643px;width:178px">Seleccione<svg width="11" height="7" viewBox="0 0 11 7"><path d="M1.2 1.2 L5.5 5.3 L9.8 1.2" fill="none" stroke="#808080" stroke-width="2.1" stroke-linecap="round" stroke-linejoin="round"/></svg></div>
 <div class="fbtn" style="left:855px;width:33px;background:#ffc107"><svg width="14" height="14" viewBox="0 0 512 512" style="position:absolute;left:9px;top:10px"><path fill="#212529" d="M125.7 160H176c17.700 0 32 14.300 32 32s-14.300 32-32 32H48c-17.700 0-32-14.300-32-32V64c0-17.700 14.300-32 32-32s32 14.300 32 32v51.200L97.600 97.600c87.500-87.500 229.300-87.500 316.800 0s87.500 229.300 0 316.800s-229.300 87.500-316.800 0c-12.500-12.500-12.500-32.800 0-45.300s32.800-12.500 45.300 0c62.500 62.500 163.800 62.500 226.300 0s62.500-163.800 0-226.300s-163.800-62.500-226.300 0L125.700 160z"/></svg></div>
 <div class="fbtn" style="left:892px;width:34px;background:#007bff"><svg width="16" height="16" viewBox="0 0 512 512" style="position:absolute;left:9px;top:8px"><path fill="#fff" d="M502.630 214.630l-45.250-45.250c-6-6-14.140-9.370-22.630-9.370H384V80c0-26.510-21.490-48-48-48H176c-26.510 0-48 21.490-48 48v80H77.250c-8.490 0-16.620 3.370-22.630 9.370L9.370 214.630c-6 6-9.370 14.140-9.370 22.630V320h128v-16c0-8.840 7.160-16 16-16h32c8.840 0 16 7.160 16 16v16h128v-16c0-8.840 7.160-16 16-16h32c8.840 0 16 7.160 16 16v16h128v-82.750c0-8.480-3.370-16.620-9.370-22.620zM320 160H192V96h128v64zm64 208c0 8.840-7.160 16-16 16h-32c-8.840 0-16-7.160-16-16v-16H192v16c0 8.840-7.160 16-16 16h-32c-8.840 0-16-7.160-16-16v-16H0v96c0 17.670 14.330 32 32 32h448c17.670 0 32-14.330 32-32v-96H384v16z"/></svg></div>
 <div class="fbtn" style="left:1066px;width:84px;background:#007bff;color:#fff;font-size:15px;line-height:33px;padding-left:10px;white-space:nowrap">Buscar <svg width="15" height="15" viewBox="0 0 512 512" style="display:inline-block;vertical-align:-2px"><path fill="#fff" d="M505 442.700L405.300 343c-4.500-4.500-10.600-7-17-7H372c27.600-35.300 44-79.700 44-128C416 93.100 322.900 0 208 0S0 93.100 0 208s93.100 208 208 208c48.300 0 92.700-16.400 128-44v16.300c0 6.400 2.500 12.500 7 17l99.700 99.700c9.400 9.400 24.600 9.400 33.900 0l28.300-28.300c9.400-9.400 9.400-24.600.1-34zM208 336c-70.700 0-128-57.200-128-128 0-70.700 57.200-128 128-128 70.700 0 128 57.200 128 128 0 70.700-57.200 128-128 128z"/></svg></div>
</div>
<div id="pinfo">1 de 4 ,Total : 4</div>
<div id="pager"><span style="left:13px">« Atras</span><span style="left:84px">Adelante »</span></div>
<div id="mt"><div class="mh"><span style="left:5px">LOTE_ID<svg width="9" height="16" viewBox="0 0 9 16"><path fill="#007bff" stroke="#007bff" stroke-width="1.2" stroke-linejoin="round" d="M0.9 6.3h7.2L4.5 10.200z"/></svg><svg width="9" height="16" viewBox="0 0 9 16"><path fill="#007bff" stroke="#007bff" stroke-width="1.2" stroke-linejoin="round" d="M0.9 9.1h7.2L4.5 4.900z"/></svg></span><span style="left:167px">CODIGO<svg width="9" height="16" viewBox="0 0 9 16"><path fill="#007bff" stroke="#007bff" stroke-width="1.2" stroke-linejoin="round" d="M0.9 6.3h7.2L4.5 10.200z"/></svg><svg width="9" height="16" viewBox="0 0 9 16"><path fill="#007bff" stroke="#007bff" stroke-width="1.2" stroke-linejoin="round" d="M0.9 9.1h7.2L4.5 4.900z"/></svg></span><span style="left:324px">ALMACEN<svg width="9" height="16" viewBox="0 0 9 16"><path fill="#007bff" stroke="#007bff" stroke-width="1.2" stroke-linejoin="round" d="M0.9 6.3h7.2L4.5 10.200z"/></svg><svg width="9" height="16" viewBox="0 0 9 16"><path fill="#007bff" stroke="#007bff" stroke-width="1.2" stroke-linejoin="round" d="M0.9 9.1h7.2L4.5 4.900z"/></svg></span><span style="left:503px">PASILLO<svg width="9" height="16" viewBox="0 0 9 16"><path fill="#007bff" stroke="#007bff" stroke-width="1.2" stroke-linejoin="round" d="M0.9 6.3h7.2L4.5 10.200z"/></svg><svg width="9" height="16" viewBox="0 0 9 16"><path fill="#007bff" stroke="#007bff" stroke-width="1.2" stroke-linejoin="round" d="M0.9 9.1h7.2L4.5 4.900z"/></svg></span><span style="left:667px">SECCION<svg width="9" height="16" viewBox="0 0 9 16"><path fill="#007bff" stroke="#007bff" stroke-width="1.2" stroke-linejoin="round" d="M0.9 6.3h7.2L4.5 10.200z"/></svg><svg width="9" height="16" viewBox="0 0 9 16"><path fill="#007bff" stroke="#007bff" stroke-width="1.2" stroke-linejoin="round" d="M0.9 9.1h7.2L4.5 4.900z"/></svg></span><span style="left:836px">CANTIDAD</span><span style="left:976px">ULT_MOV</span><span style="left:1193px">OPC</span></div><div class="mr s" style="top:30px"><b>1127</b><span style="left:167px">TYP-6PK1685</span><span style="left:324px">Centro</span><span style="left:836px">1.00</span><span style="left:976px">2025-10-20 11:18:21</span><div class="ib"><svg width="16" height="15" viewBox="0 0 16 15"><rect x="1.8" y="1.3" width="12.4" height="12" rx="1.2" fill="none" stroke="#fff" stroke-width="1.4"/><text x="8" y="11.6" text-anchor="middle" font-family="Liberation Serif,serif" font-weight="700" font-size="11.500" fill="#fff" stroke="#fff" stroke-width=".4">i</text></svg></div></div><div class="mr" style="top:74px"><b>1069</b><span style="left:167px">TYP-6PK1685</span><span style="left:324px">MATRIZ</span><span style="left:836px">59.00</span><span style="left:976px">2026-01-29 14:15:18</span><div class="ib"><svg width="16" height="15" viewBox="0 0 16 15"><rect x="1.8" y="1.3" width="12.4" height="12" rx="1.2" fill="none" stroke="#fff" stroke-width="1.4"/><text x="8" y="11.6" text-anchor="middle" font-family="Liberation Serif,serif" font-weight="700" font-size="11.500" fill="#fff" stroke="#fff" stroke-width=".4">i</text></svg></div></div><div class="mr s" style="top:118px"><b>1067</b><span style="left:167px">TYP-6PK1685</span><span style="left:324px">MATRIZ</span><span style="left:836px">5.00</span><span style="left:976px">2025-06-04 12:34:20</span><div class="ib"><svg width="16" height="15" viewBox="0 0 16 15"><rect x="1.8" y="1.3" width="12.4" height="12" rx="1.2" fill="none" stroke="#fff" stroke-width="1.4"/><text x="8" y="11.6" text-anchor="middle" font-family="Liberation Serif,serif" font-weight="700" font-size="11.500" fill="#fff" stroke="#fff" stroke-width=".4">i</text></svg></div></div><div class="mr" style="top:162px;border-bottom:none"><b>1065</b><span style="top:12px;left:167px">TYP-6PK1685</span><span style="top:12px;left:324px">MATRIZ</span><span style="top:12px;left:503px">Rack 2</span><span style="top:12px;left:667px">A</span><span style="top:12px;left:836px">11.00</span><span style="top:12px;left:976px">2026-01-01 22:01:08</span><div class="ib"><svg width="16" height="15" viewBox="0 0 16 15"><rect x="1.8" y="1.3" width="12.4" height="12" rx="1.2" fill="none" stroke="#fff" stroke-width="1.4"/><text x="8" y="11.6" text-anchor="middle" font-family="Liberation Serif,serif" font-weight="700" font-size="11.500" fill="#fff" stroke="#fff" stroke-width=".4">i</text></svg></div><div style="position:absolute;left:161px;top:42px;width:1093px;height:1px;background:#dee2e6"></div></div></div>
<div id="redbox"></div>
</div>
<div id="footer"><svg width="11" height="11" viewBox="0 0 11 11" style="left:321px;top:13px"><path fill="#333" d="M.5 4.500c0-1.200 1.600-1.200 1.600 0 0 .8-.8 1-.8 2 0 1.200 1.400 1.800 2.800 1.500C6 7.700 6.500 6 6.300 2 6.400.8 8.600.9 8.500 2.300c0 .7-1.200.8-1.400.2.600 0 1-.3.700-.7-.500-.300-.900.100-.800 1.300C7.100 4.300 8.800 6 9 7.800c0 .900-.900 1.600-1.900 1.700.500-1.300.300-2.700-.200-3.700 0 1.600-.500 3.400-1.200 3.900L3.800 10l-.400-.9-1.400.9C.900 10 .1 9 .1 7.800c.100-1.200 1.300-1.900 1.500-2.600C1.300 5.300.5 5 .5 4.500z"/><path fill="#333" d="M3.200 1h1.400v4.300H3.200zM8.600 1.300h1v4h-1z"/></svg><div class="ft" style="left:336px;top:3px;font-size:13.500px;font-weight:700;letter-spacing:0;color:#333;transform:scaleX(.735);transform-origin:0 50%;-webkit-text-stroke:.4px #333">ALPHERIX</div><div class="ft" style="left:394px;top:2px">ERP 2003-2025 Alpherix es Marca Registrada © 8-53</div><div class="ft" style="left:680px;top:3px;font-weight:700;font-size:12px;letter-spacing:0;color:#444">ჲJ୧೧ଡi</div><div class="ft" style="left:720px;top:2px">®</div><svg width="21" height="17" viewBox="0 0 21 17" style="left:738px;top:10px"><ellipse cx="10.500" cy="8.500" rx="10.500" ry="8.500" fill="#8b0000"/><rect x="5" y="4.300" width="11" height="8.400" rx="2.400" fill="#fff"/><path d="M9.200 6.300l3.600 2.200-3.600 2.200z" fill="#8b0000"/></svg><svg width="18" height="18" viewBox="0 0 18 18" style="left:768px;top:9px"><circle cx="9" cy="9" r="9" fill="#0000ff"/><rect x="4" y="4" width="10" height="10" rx="2" fill="#fff"/><path d="M9.800 14V10H8.500V8.500h1.300V7.400c0-1.300.8-2 2-2h1.100v1.500h-.8c-.5 0-.6.200-.6.600v1h1.400l-.2 1.500h-1.200v4z" fill="#0000ff"/></svg><svg width="18" height="18" viewBox="0 0 18 18" style="left:795px;top:9px"><circle cx="9" cy="9" r="9" fill="#d6249f"/><rect x="4.600" y="4.600" width="8.800" height="8.800" rx="2.400" fill="none" stroke="#fff" stroke-width="1.700"/><circle cx="9" cy="9" r="2" fill="none" stroke="#fff" stroke-width="1.200"/><circle cx="11.600" cy="6.400" r=".6" fill="#fff"/></svg><div class="ft" style="left:820px;top:2px;font-size:9px;color:#8a8a8a;letter-spacing:.25px">7.4.33&nbsp; 2026-02-24 12:40:37</div><svg width="14" height="11" viewBox="0 0 14 11" style="left:1523px;top:15px"><g fill="none" stroke="#007bff" stroke-width="1.300" stroke-linecap="round"><path d="M.7 6.300C3 3.200 7 2.200 11 3.500"/><path d="M2.500 8.800C6 9.300 9.500 8 11.500 5"/><path d="M3.200 10.300L12.700 .7"/><circle cx="6.800" cy="5.800" r="1.600"/></g></svg><div class="fl" style="left:1551px">Privacidad</div><svg width="10" height="12" viewBox="0 0 10 12" style="left:1626px;top:15px"><path fill="#007bff" d="M1.500 0h4.800L9.500 3.200v7.300c0 .8-.7 1.500-1.500 1.500H1.500C.7 12 0 11.300 0 10.500v-9C0 .7.700 0 1.500 0z"/><g fill="#e9ecef"><rect x="2" y="4.600" width="5.500" height="1"/><rect x="2" y="6.600" width="5.500" height="1"/><rect x="2" y="8.600" width="3.800" height="1"/><path d="M6 .8v2.700h2.700z"/></g></svg><div class="fl" style="left:1648.500px">Términos</div><svg width="12" height="12" viewBox="0 0 12 12" style="left:1716px;top:15px"><g fill="#007bff"><circle cx="6" cy="3.800" r="3"/><path d="M.8 12c0-2.500 2.200-4 5.200-4s5.200 1.500 5.200 4z"/><path d="M1.800 4.200C1.800 1.600 3.600 0 6 0s4.200 1.600 4.200 4.200h-1C9.200 2.200 7.800 1 6 1S2.800 2.200 2.800 4.200z"/><rect x="1.300" y="3.300" width="1.400" height="2.600" rx=".6"/><rect x="9.300" y="3.300" width="1.400" height="2.600" rx=".6"/></g></svg><div class="fl" style="left:1741px">Soporte SLA</div><svg width="12" height="12" viewBox="0 0 12 12" style="left:1827px;top:15px"><g fill="none" stroke="#007bff" stroke-width="1.300"><rect x=".7" y="3.300" width="10.600" height="2.600" rx=".5"/><path d="M1.600 6v5.300h8.800V6M6 3.300v8"/><path d="M6 3.200C4.500 3.200 3 2.600 3 1.600S4.800.2 6 3.200C7.200.2 9 .600 9 1.600S7.500 3.200 6 3.200z"/></g></svg><div class="fl" style="left:1852.500px">Beneficios</div></div>
<div id="menu"><svg width="23.400" height="20.400" viewBox="0 0 24 22" preserveAspectRatio="none" style="position:absolute;left:9px;top:12px"><rect x="0" y="0" width="24" height="22" rx="3" fill="#fff"/><g fill="#212529"><rect x="3.300" y="3.600" width="4.600" height="3.600"/><rect x="9.700" y="3.600" width="4.600" height="3.600"/><rect x="16.100" y="3.600" width="4.600" height="3.600"/><rect x="3.300" y="9.200" width="4.600" height="3.600"/><rect x="9.700" y="9.200" width="4.600" height="3.600"/><rect x="16.100" y="9.200" width="4.600" height="3.600"/><rect x="3.300" y="14.800" width="4.600" height="3.600"/><rect x="9.700" y="14.800" width="4.600" height="3.600"/><rect x="16.100" y="14.800" width="4.600" height="3.600"/></g></svg><div class="t">Menú</div></div>
</body>
</html>
